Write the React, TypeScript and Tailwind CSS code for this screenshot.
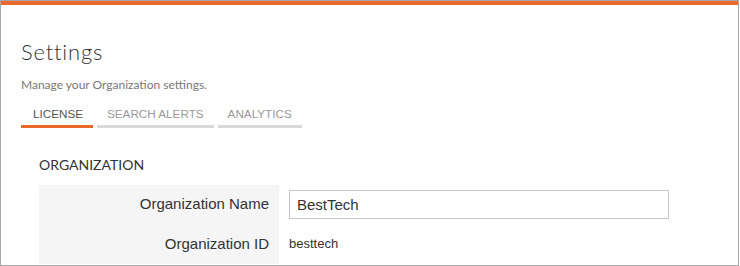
export default function App() {
  const tabs = [
    { label: 'LICENSE', active: true },
    { label: 'SEARCH ALERTS', active: false },
    { label: 'ANALYTICS', active: false },
  ];

  return (
    <div className="w-[739px] h-[266px] border border-[#a6a6a6] bg-white overflow-hidden">
      {/* Top accent */}
      <div className="h-[4px] bg-[#e8692a]" />

      <div className="px-5 pt-[33px]">
        {/* Header */}
        <h1 className="text-[22px] leading-[28px] font-light tracking-[0.8px] text-[#333] font-['Lato',sans-serif]">
          Settings
        </h1>
        <p className="mt-[11px] text-[12px] leading-[16px] text-[#777] font-['Lato',sans-serif]">
          Manage your Organization settings.
        </p>

        {/* Tabs */}
        <div className="mt-[13px] flex gap-[4px]">
          {tabs.map((tab) => (
            <div
              key={tab.label}
              className={`px-[10px] pb-[3px] text-[11.7px] leading-[16px] font-['Liberation_Sans',Arial,sans-serif] border-b-[3px] ${
                tab.active ? 'border-[#e8692a] text-[#555] pl-[12px]' : 'border-[#d9d9d9] text-[#999]'
              }`}
            >
              {tab.label}
            </div>
          ))}
        </div>

        {/* Organization section */}
        <div className="ml-[18px] mt-[28px]">
          <h2 className="text-[14px] leading-[18px] text-[#333] font-['Lato',sans-serif]">
            ORGANIZATION
          </h2>
          <div className="mt-[11px] grid grid-cols-[240px_1fr] font-['Liberation_Sans',Arial,sans-serif] text-[#333]">
            <div className="bg-[#f5f5f5] pr-[10px] h-[39px] flex items-center justify-end text-[15px]">
              Organization Name
            </div>
            <div className="pl-[10px] h-[39px] flex items-center">
              <input
                readOnly
                value="BestTech"
                className="w-[380px] h-[29px] border border-[#c8c8c8] px-[7px] text-[15px] text-[#333] outline-none"
              />
            </div>
            <div className="bg-[#f5f5f5] pr-[10px] h-[40px] flex items-center justify-end text-[15px]">
              Organization ID
            </div>
            <div className="pl-[10px] h-[40px] flex items-center text-[13px]">besttech</div>
          </div>
        </div>
      </div>
    </div>
  );
}
